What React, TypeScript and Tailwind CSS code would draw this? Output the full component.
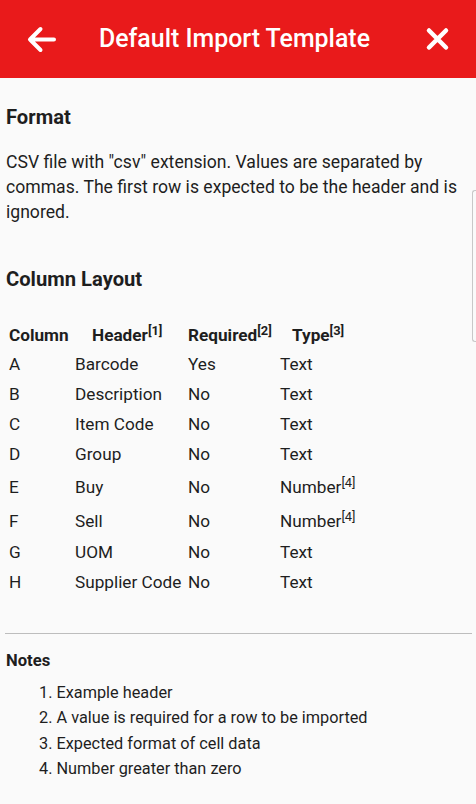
import React from 'react';

const rows = [
  { col: 'A', header: 'Barcode', req: 'Yes', type: 'Text' },
  { col: 'B', header: 'Description', req: 'No', type: 'Text' },
  { col: 'C', header: 'Item Code', req: 'No', type: 'Text' },
  { col: 'D', header: 'Group', req: 'No', type: 'Text' },
  { col: 'E', header: 'Buy', req: 'No', type: 'Number', note: true },
  { col: 'F', header: 'Sell', req: 'No', type: 'Number', note: true },
  { col: 'G', header: 'UOM', req: 'No', type: 'Text' },
  { col: 'H', header: 'Supplier Code', req: 'No', type: 'Text' },
];

const notes = [
  'Example header',
  'A value is required for a row to be imported',
  'Expected format of cell data',
  'Number greater than zero',
];

function App() {
  return (
    <div className="relative w-[476px] h-[804px] overflow-hidden bg-[#fafafa] text-[#1e1e1e] font-['Roboto',sans-serif]">
      <header className="flex h-[78px] items-center bg-[#e91a1b] text-white">
        <svg className="ml-[26px]" width="31" height="29" viewBox="0 0 31 29" fill="none" stroke="white" strokeWidth="4" strokeLinecap="round" strokeLinejoin="round">
          <path d="M28 14.5H4M14.5 4L4 14.5L14.5 25" />
        </svg>
        <h1 className="ml-[42px] text-[24.9px] font-medium leading-none">Default Import Template</h1>
        <div className="flex-1" />
        <svg className="mr-[26px]" width="25" height="24" viewBox="0 0 25 24" fill="none" stroke="white" strokeWidth="4.5" strokeLinecap="round">
          <path d="M4 3.5L21 20.5M21 3.5L4 20.5" />
        </svg>
      </header>

      <main className="pl-[6px] pr-[8px]">
        <h2 className="mt-[25px] text-[20.2px] font-bold leading-[28px]">Format</h2>
        <p className="mt-[19px] text-[17.6px] leading-[25px] pr-[4px]">
          CSV file with "csv" extension. Values are separated by commas. The first row is expected to be the header and is ignored.
        </p>

        <h2 className="mt-[40px] text-[20.2px] font-bold leading-[28px]">Column Layout</h2>

        <div className="mt-[26px] ml-[3px] grid grid-cols-[66px_113px_92px_80px] text-[17.2px] leading-6">
          <div className="h-[30px] pt-[4px] font-bold">Column</div>
          <div className="h-[30px] pt-[4px] pl-[17px] font-bold whitespace-nowrap">Header<sup>[1]</sup></div>
          <div className="h-[30px] pt-[4px] font-bold whitespace-nowrap">Required<sup>[2]</sup></div>
          <div className="h-[30px] pt-[4px] pl-[12px] font-bold whitespace-nowrap">Type<sup>[3]</sup></div>
          {rows.map((r) => {
            const cell = r.note ? 'h-[34px] pt-[6px] whitespace-nowrap' : 'h-[30px] pt-[3px] whitespace-nowrap';
            return (
              <React.Fragment key={r.col}>
                <div className={cell}>{r.col}</div>
                <div className={cell}>{r.header}</div>
                <div className={cell}>{r.req}</div>
                <div className={cell}>
                  {r.type}
                  {r.note && <sup>[4]</sup>}
                </div>
              </React.Fragment>
            );
          })}
        </div>

        <hr className="mt-[36px] ml-[-1px] w-[467px] border-t border-[#bdbdbd]" />

        <h3 className="mt-[15px] text-[16.6px] font-bold leading-6">Notes</h3>
        <ol className="mt-[7px] pl-[33px] text-[16.3px] leading-[25.3px]">
          {notes.map((n, i) => (
            <li key={i}>
              {i + 1}. {n}
            </li>
          ))}
        </ol>
      </main>

      <div className="absolute right-0 top-[190px] h-[152px] w-[4px] rounded-l-[3px] border border-r-0 border-[#c8c8c8]" />
    </div>
  );
}

export default App;
